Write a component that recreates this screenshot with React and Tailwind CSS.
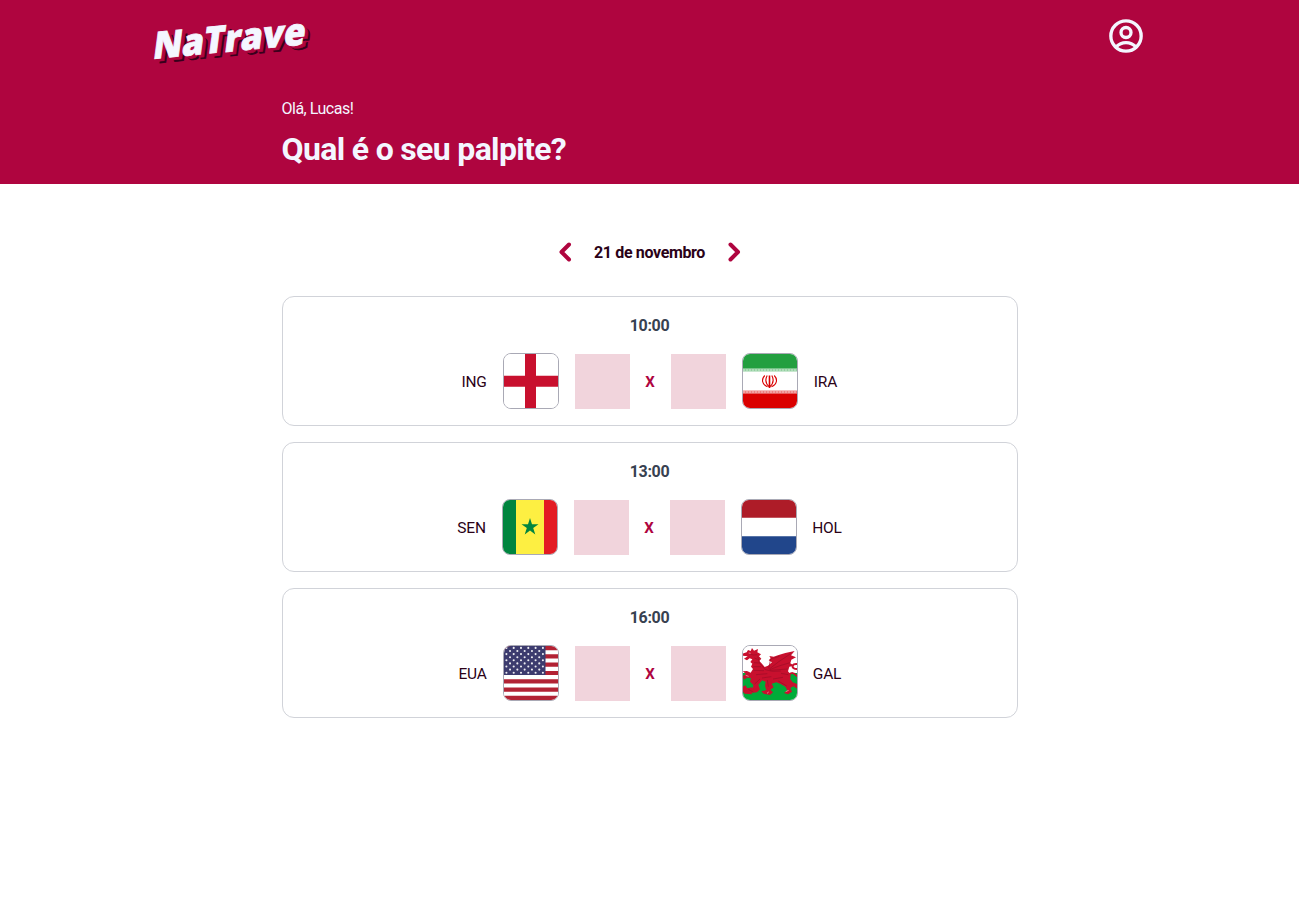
import React from "react";

const stars = [];
for (let r = 0; r < 9; r++) {
  for (let c = 0; c < (r % 2 ? 5 : 6); c++) {
    stars.push([2.4 + c * 7.3 + (r % 2 ? 3.65 : 0), 1.9 + r * 3.1]);
  }
}

function England() {
  return (
    <svg viewBox="0 0 54 54" className="block size-full">
      <path fill="#fff" d="M0 0h54v54H0z" />
      <path fill="#c8102e" d="M21 0h11v54H21zM0 21.800h54v11H0z" />
    </svg>
  );
}

function Iran() {
  return (
    <svg viewBox="0 0 54 54" className="block size-full">
      <path fill="#fff" d="M0 0h54v54H0z" />
      <path fill="#239f40" d="M0 0h54v14.500H0z" />
      <path fill="#da0000" d="M0 39.500h54V54H0z" />
      <path stroke="#239f40" strokeOpacity=".5" strokeWidth="3" d="M0 16h54" />
      <path stroke="#da0000" strokeOpacity=".5" strokeWidth="3" d="M0 38h54" />
      <path stroke="#fff" strokeOpacity=".55" strokeWidth="1" strokeDasharray="2 1" d="M0 16h54M0 38h54" />
      <g fill="none" stroke="#da0000" strokeWidth="1.1">
        <path strokeWidth="1.600" d="M26.500 21.500V34" />
        <path d="M21.800 21.500c-3.800 3.800-2.800 9 2.700 11.300M31.200 21.500c3.800 3.800 2.800 9-2.700 11.300M24.200 21.500c-2.200 4-1.800 8 2.300 11.500 4.100-3.500 4.500-7.500 2.300-11.500" />
      </g>
    </svg>
  );
}

function Senegal() {
  return (
    <svg viewBox="0 0 54 54" className="block size-full">
      <path fill="#00853f" d="M0 0h13v54H0z" />
      <path fill="#fdef42" d="M13 0h28v54H13z" />
      <path fill="#e31b23" d="M41 0h13v54H41z" />
      <path fill="#00853f" d="m27 18 2 6.300h6.500l-5.300 3.800 2.100 6.300-5.300-3.900-5.300 3.900 2.100-6.300-5.300-3.800H25z" />
    </svg>
  );
}

function Netherlands() {
  return (
    <svg viewBox="0 0 54 54" className="block size-full">
      <path fill="#fff" d="M0 0h54v54H0z" />
      <path fill="#ae1c28" d="M0 0h54v17.700H0z" />
      <path fill="#21468b" d="M0 36.300h54V54H0z" />
    </svg>
  );
}

function UnitedStates() {
  return (
    <svg viewBox="0 0 54 54" className="block size-full">
      <path fill="#fff" d="M0 0h54v54H0z" />
      <path stroke="#b22234" strokeWidth="4.150" d="M0 2.080h54M0 10.380h54M0 18.690h54M0 27h54M0 35.300h54M0 43.600h54M0 51.900h54" />
      <path fill="#3c3b6e" d="M0 0h41.500v29.100H0z" />
      {stars.map(([x, y], i) => (
        <circle key={i} cx={x} cy={y} r="1.05" fill="#fff" fillOpacity=".9" />
      ))}
    </svg>
  );
}

function Wales() {
  return (
    <svg viewBox="15 15 162 162" className="block size-full">
      <path fill="#fff" d="M15 15h162v82H15z" />
      <path fill="#00ab39" d="M15 96h162v81H15z" />
      <path d="M178 69C160 66 158 85 178 84M148 104C165 90 168 98 178 106" fill="none" stroke="#c8102e" strokeWidth="6" />
      <g fill="#c8102e">
        <path d="M14 38L26 34 30 27 38 30 42 21 48 29 60 24 58 34 69 40 63 46 70 53 64 60 72 68 80 78 90 74 102 64 92 58 98 52 94 45 107 47 122 42 142 36 170 30 159 43 174 49 160 56 157 67 169 74 154 77 150 91 158 101 157 114 164 124 178 129V143L166 136 157 141 162 152 150 160 138 156 148 148 142 137 128 129 115 124 101 128 107 139 97 146 105 154 96 162 77 158 70 151 85 147 81 135 83 122 72 118 61 132 66 145 57 154 33 157 27 148 44 143 46 132 36 122 39 111 27 110 18 116 14 106 24 99 14 91 27 90 38 95 45 84 39 77 43 68 37 63 43 55 35 52 27 58 18 53 29 46 14 44z" />
        <path d="M14 137L22 133 28 142 42 139 49 146 38 152 43 160 20 158 14 151z" />
      </g>
      <g fill="none" stroke="#9b0e27" strokeWidth="2">
        <path d="M92 82L98 54 124 46M94 84L121 63 158 38M95 86L126 74 156 65M96 88L123 86 149 84" />
        <path d="M35 39L47 42 58 41M49 51L59 55M48 65L63 66M46 77L69 77M47 88L78 89M54 101L88 98M72 111L100 107M105 114L135 109M129 97L151 101M59 47L65 67 82 86 103 91 128 90M66 114L50 129M121 120L146 135M88 117L91 137M31 145L46 153" />
      </g>
      <path d="M32 36L38 37M23 103L32 106M143 152L152 148M92 153L87 157" stroke="#fff" strokeOpacity=".7" strokeWidth="2" />
    </svg>
  );
}

function Team({ children, flag, reverse, width }) {
  return (
    <div className={reverse ? "flex flex-row-reverse items-center gap-4" : "flex items-center gap-4"}>
      <span className={`${width} flex justify-center pt-0.5 text-[15.500px] leading-6 tracking-[-0.200px] whitespace-nowrap text-[#2b0218]`}>{children}</span>
      <div className="size-14 overflow-hidden rounded-lg border border-[#a9a9b5]">{flag}</div>
    </div>
  );
}

function Game({ time, home, away }) {
  return (
    <section className="flex h-[130px] flex-col items-center rounded-xl border border-[#d1d3d9] pt-[17px]">
      <time className="text-base leading-6 font-bold tracking-[-0.300px] text-[#374151]">{time}</time>
      <div className="mt-[15px] flex items-center gap-4">
        <Team flag={home.flag} width={home.width}>{home.code}</Team>
        <div className="mt-px size-[55px] bg-[#f1d4dc]" />
        <span className="flex w-[9px] justify-center pt-0.5 text-[15px] leading-6 font-bold text-[#af053f]">X</span>
        <div className="mt-px size-[55px] bg-[#f1d4dc]" />
        <Team flag={away.flag} width={away.width} reverse>{away.code}</Team>
      </div>
    </section>
  );
}

function Logo() {
  const word = { fontSize: 37, textLength: 153, lengthAdjust: "spacingAndGlyphs" };
  return (
    <svg width="170" height="66" viewBox="0 0 170 66" className="overflow-visible font-['Open_Sans',sans-serif] font-extrabold" aria-label="NaTrave">
      <g transform="translate(2 56) rotate(-5.500) skewX(-13)">
        <text x="5.600" y="4.600" fill="#36001b" stroke="#36001b" strokeWidth=".8" {...word}>NaTrave</text>
        <text x="3.700" y="2.900" fill="#af053f" stroke="#af053f" strokeWidth=".6" {...word}>NaTrave</text>
        <text x="0" y="0" fill="#f4f6ff" stroke="#f4f6ff" strokeWidth=".8" {...word}>NaTrave</text>
      </g>
    </svg>
  );
}

function Chevron({ right }) {
  return (
    <svg width="14" height="20" viewBox="0 0 14 20" fill="none" stroke="#af053f" strokeWidth="4" strokeLinecap="round" strokeLinejoin="round">
      <path d={right ? "M2.500 2.500 10 10 2.500 17.500" : "M11 2.500 3.500 10l7.500 7.500"} />
    </svg>
  );
}

const games = [
  {
    time: "10:00",
    home: { code: "ING", flag: <England />, width: "w-[25px]" },
    away: { code: "IRA", flag: <Iran />, width: "w-[24px]" },
  },
  {
    time: "13:00",
    home: { code: "SEN", flag: <Senegal />, width: "w-[28px]" },
    away: { code: "HOL", flag: <Netherlands />, width: "w-[29px]" },
  },
  {
    time: "16:00",
    home: { code: "EUA", flag: <UnitedStates />, width: "w-[28px]" },
    away: { code: "GAL", flag: <Wales />, width: "w-[27px]" },
  },
];

export default function App() {
  return (
    <div className="min-h-[919px] bg-white font-['Roboto',sans-serif]">
      <header className="h-[184px] bg-[#af053f] text-[#f4f6ff]">
        <div className="mx-auto flex h-[72px] w-[999px] items-center justify-between pr-[3px]">
          <Logo />
          <svg width="40" height="40" viewBox="0 0 24 24" fill="none" stroke="currentColor" strokeWidth="2">
            <circle cx="12" cy="12" r="9.100" />
            <circle cx="12" cy="9.900" r="3" />
            <path d="M6.200 18.400c3-3.300 8.600-3.300 11.600 0" />
          </svg>
        </div>
        <div className="mx-auto flex w-[736px] flex-col pt-[25px]">
          <span className="text-base leading-6 tracking-[-0.500px]">Olá, Lucas!</span>
          <h1 className="mt-2 text-[32px] leading-10 font-bold tracking-[-0.660px] whitespace-nowrap">Qual é o seu palpite?</h1>
        </div>
      </header>
      <main className="mx-auto w-[736px] pt-14">
        <div className="flex h-6 items-center justify-center gap-[22px]">
          <Chevron />
          <span className="flex w-[112px] justify-center pt-0.5 text-base font-bold tracking-[-0.350px] whitespace-nowrap text-[#2b0218]">21 de novembro</span>
          <Chevron right />
        </div>
        <div className="mt-8 flex flex-col gap-4">
          {games.map((g) => (
            <Game key={g.time} {...g} />
          ))}
        </div>
      </main>
    </div>
  );
}
